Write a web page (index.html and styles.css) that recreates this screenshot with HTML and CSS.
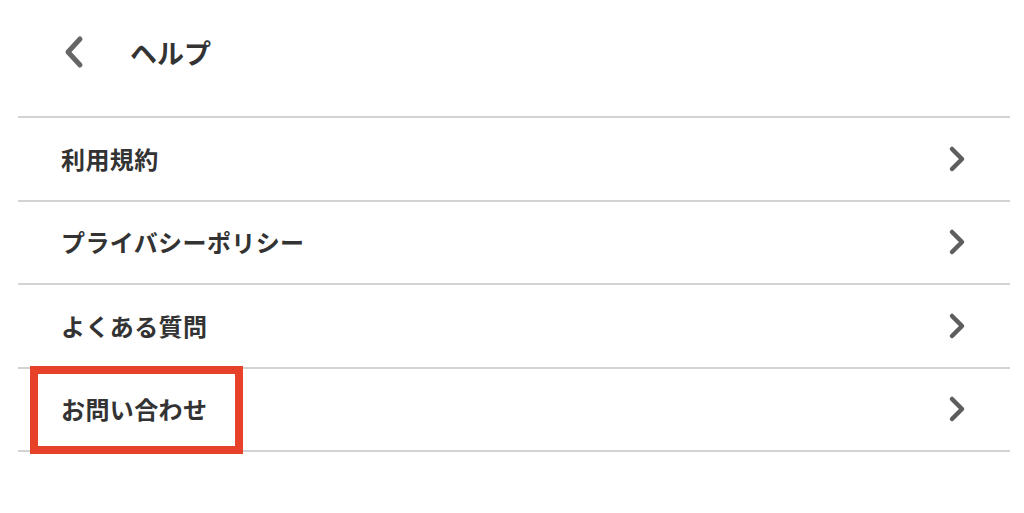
FILE: index.html
```html
<!DOCTYPE html>
<html lang="ja">
<head>
<meta charset="utf-8">
<link rel="stylesheet" href="styles.css">
</head>
<body>
<header class="header">
  <svg class="back" width="24" height="34" viewBox="0 0 24 34"><path d="M19 4 L7 17 L19 30" fill="none" stroke="#666" stroke-width="5" stroke-linecap="round" stroke-linejoin="round"/></svg>
  <h1 class="title">ヘルプ</h1>
</header>
<ul class="list">
  <li class="row"><span class="label">利用規約</span><svg class="chev" width="20" height="28" viewBox="0 0 20 28"><path d="M5 4 L15 14 L5 24" fill="none" stroke="#5e5e5e" stroke-width="4.5" stroke-linecap="round" stroke-linejoin="round"/></svg></li>
  <li class="row"><span class="label">プライバシーポリシー</span><svg class="chev" width="20" height="28" viewBox="0 0 20 28"><path d="M5 4 L15 14 L5 24" fill="none" stroke="#5e5e5e" stroke-width="4.5" stroke-linecap="round" stroke-linejoin="round"/></svg></li>
  <li class="row"><span class="label">よくある質問</span><svg class="chev" width="20" height="28" viewBox="0 0 20 28"><path d="M5 4 L15 14 L5 24" fill="none" stroke="#5e5e5e" stroke-width="4.5" stroke-linecap="round" stroke-linejoin="round"/></svg></li>
  <li class="row row-last"><span class="label">お問い合わせ</span><svg class="chev" width="20" height="28" viewBox="0 0 20 28"><path d="M5 4 L15 14 L5 24" fill="none" stroke="#5e5e5e" stroke-width="4.5" stroke-linecap="round" stroke-linejoin="round"/></svg><span class="highlight"></span></li>
</ul>
</body>
</html>
```
FILE: styles.css
```css
html, body {
  margin: 0;
  padding: 0;
  background: #fff;
}
body {
  width: 1024px;
  height: 513px;
  overflow: hidden;
  font-family: "Noto Sans CJK JP", "Noto Sans", sans-serif;
  color: #333;
}
.header {
  height: 116px;
  display: flex;
  align-items: center;
  padding-left: 61px;
  padding-bottom: 12px;
  box-sizing: border-box;
}
.back {
  display: block;
}
.title {
  margin: 0 0 0 45px;
  font-size: 27px;
  font-weight: 700;
  line-height: 1;
  color: #333;
}
.list {
  list-style: none;
  margin: 0 14px 0 18px;
  padding: 0;
}
.row {
  position: relative;
  height: 81.5px;
  border-top: 2px solid #d3d3d3;
  display: flex;
  align-items: center;
  justify-content: space-between;
  padding: 0 43px 0 43px;
}
.row-last {
  border-bottom: 2px solid #d3d3d3;
  height: 81px;
}
.label {
  font-size: 24px;
  font-weight: 700;
  line-height: 1;
  letter-spacing: 0.4px;
}
.chev {
  display: block;
}
.highlight {
  position: absolute;
  left: 12px;
  top: -3px;
  width: 213px;
  height: 88px;
  box-sizing: border-box;
  border: 8px solid #e8412a;
}
```
